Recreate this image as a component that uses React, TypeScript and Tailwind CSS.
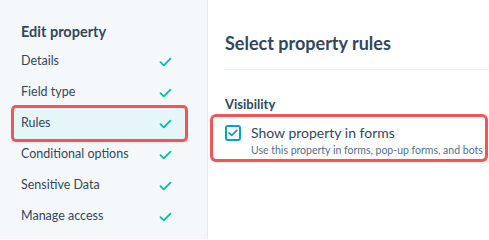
import React from "react";

function Check() {
  return (
    <svg width="13" height="10" viewBox="0 0 13 10" fill="none">
      <path d="M1.5 5.2 L4.8 8.3 L11.5 1.6" stroke="#00bda5" strokeWidth="1.8" strokeLinecap="round" strokeLinejoin="round" />
    </svg>
  );
}

const items = [
  "Details",
  "Field type",
  "Rules",
  "Conditional options",
  "Sensitive Data",
  "Manage access",
];

export default function App() {
  return (
    <div
      className="flex w-[489px] h-[239px] overflow-hidden bg-white text-[#33475b]"
      style={{ fontFamily: "Lato, sans-serif" }}
    >
      <aside className="w-[208px] shrink-0 bg-[#f5f8fa] border-r border-[#e6ebf0] pt-[22px]">
        <h2 className="pl-[21px] text-[14.5px] font-bold leading-[20px] mb-[4px]">Edit property</h2>
        <ul className="flex flex-col">
          {items.map((t) => (
            <li
              key={t}
              className={
                t === "Rules"
                  ? "ml-[14px] w-[171px] h-[31px] pl-[7px] pr-[13px] flex items-center justify-between bg-[#e5f5f8] rounded-[2px] ring-[3px] ring-[#f2545b] shadow-[0_2px_3px_rgba(0,0,0,0.45)]"
                  : "ml-[14px] w-[171px] h-[31px] pl-[7px] pr-[13px] flex items-center justify-between"
              }
            >
              <span className="text-[12.5px] leading-none">{t}</span>
              <Check />
            </li>
          ))}
        </ul>
      </aside>
      <main className="flex-1 min-w-0 pt-[31px]">
        <h1 className="pl-[17px] text-[18px] font-bold leading-[24px]">Select property rules</h1>
        <div className="ml-[16px] mt-[14px] h-px bg-[#eaf0f6]" />
        <div className="pl-[17px] mt-[25px] text-[13px] font-bold leading-[18px]">Visibility</div>
        <div className="ml-[5px] mt-[4px] mr-[4px] h-[42px] rounded-[3px] ring-[3px] ring-[#f2545b] shadow-[0_2px_3px_rgba(0,0,0,0.45)] flex items-start pl-[12px] pt-[8px]">
          <div className="w-[16px] h-[16px] rounded-[3px] border-[2px] border-[#00a4bd] bg-white flex items-center justify-center shrink-0">
            <svg width="10" height="8" viewBox="0 0 10 8" fill="none">
              <path d="M1.2 4 L3.8 6.4 L8.8 1.4" stroke="#00a4bd" strokeWidth="1.8" strokeLinecap="round" strokeLinejoin="round" />
            </svg>
          </div>
          <div className="ml-[10px] flex flex-col whitespace-nowrap min-w-0">
            <span className="text-[14px] leading-[16px]">Show property in forms</span>
            <span className="text-[10.5px] leading-[14px] mt-[2px] text-[#516f90]">Use this property in forms, pop-up forms, and bots</span>
          </div>
        </div>
      </main>
    </div>
  );
}
